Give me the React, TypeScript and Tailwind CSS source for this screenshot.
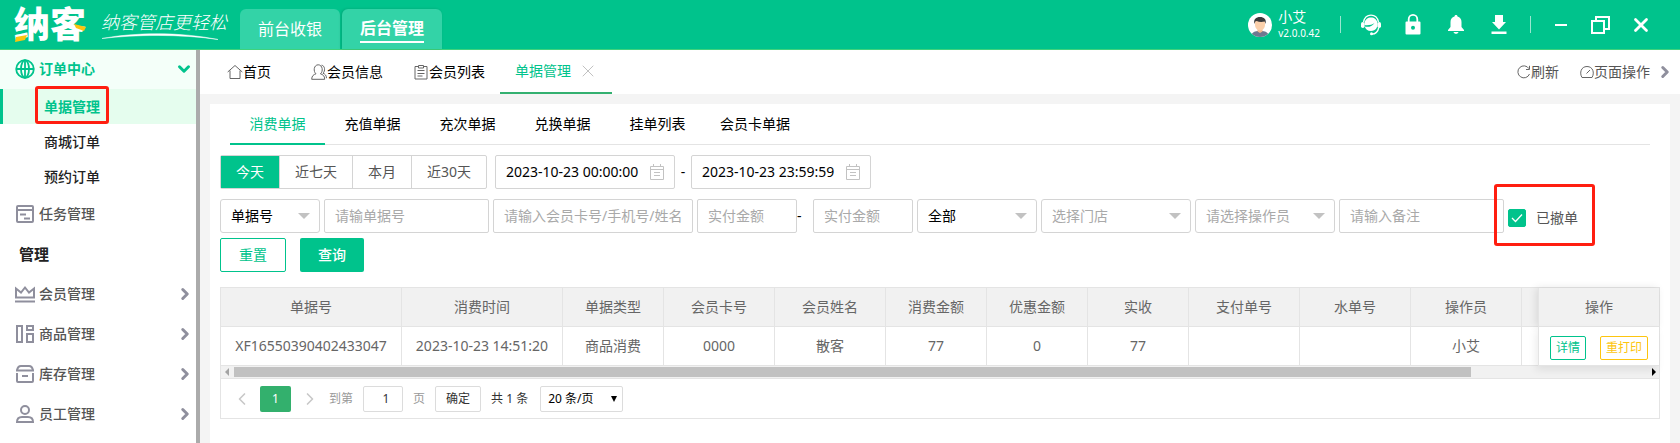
import React, { useState } from 'react';
import {
  ChevronDown,
  ChevronLeft,
  ChevronRight,
  X,
} from 'lucide-react';

interface Column {
  title: string;
  width: string;
  value: string;
}

const columns: Column[] = [
  { title: '单据号', width: 'w-[181px]', value: 'XF16550390402433047' },
  { title: '消费时间', width: 'w-[161px]', value: '2023-10-23 14:51:20' },
  { title: '单据类型', width: 'w-[101px]', value: '商品消费' },
  { title: '会员卡号', width: 'w-[111px]', value: '0000' },
  { title: '会员姓名', width: 'w-[111px]', value: '散客' },
  { title: '消费金额', width: 'w-[101px]', value: '77' },
  { title: '优惠金额', width: 'w-[101px]', value: '0' },
  { title: '实收', width: 'w-[101px]', value: '77' },
  { title: '支付单号', width: 'w-[111px]', value: '' },
  { title: '水单号', width: 'w-[111px]', value: '' },
  { title: '操作员', width: 'w-[111px]', value: '小艾' },
];

const billTabs = ['消费单据', '充值单据', '充次单据', '兑换单据', '挂单列表', '会员卡单据'];
const ranges = ['今天', '近七天', '本月', '近30天'];

function Logo() {
  return (
    <div className="relative ml-[14px] w-[74px] shrink-0">
      <span className="block text-[36px] leading-[50px] font-black text-white">纳客</span>
      <svg className="absolute top-[24px] left-0" width="74" height="18" viewBox="0 0 74 18">
        <path d="M2 13l11-2-2 5-10 2z" fill="#fdc50f" />
        <path d="M60 0l12 3-2 4-8-3z" fill="#fdc50f" />
      </svg>
    </div>
  );
}

function Slogan() {
  return (
    <div className="ml-[13px] w-[126px] shrink-0">
      <div className="text-[18px] leading-[20px] font-light italic whitespace-nowrap text-white">
        纳客管店更轻松
      </div>
      <svg width="118" height="8" viewBox="0 0 118 8">
        <path d="M1 6.500C35 0 80 0 117 7.500C80 2 35 2.500 1 6.500z" fill="#fff" stroke="#fff" strokeWidth=".5" />
      </svg>
    </div>
  );
}

function Avatar() {
  return (
    <svg width="24" height="24" viewBox="0 0 24 24">
      <clipPath id="face">
        <circle cx="12" cy="12" r="12" />
      </clipPath>
      <g clipPath="url(#face)">
        <rect width="24" height="24" fill="#fff" />
        <path d="M3 24c0-4 3-5.500 6.500-6h5c3.500.5 6.500 2 6.500 6z" fill="#6f7990" />
        <path d="M9.500 15h5v3.500L12 20l-2.500-1.500z" fill="#f0b890" />
        <path d="M7 8h10v4c0 3-2.500 5.500-5 5.500S7 15 7 12z" fill="#fbd0ab" />
        <path d="M6.300 11C5.500 6 8 4 12 4s6.500 2 5.700 7l-1-2.500c-3 .8-6 .5-8-.5l-1.400.6z" fill="#3a3a3c" />
      </g>
    </svg>
  );
}

function ServiceIcon() {
  return (
    <svg width="20" height="22" viewBox="0 0 20 22" fill="none">
      <path d="M2.500 8C3.500 3.500 6.500 1.200 10 1.200S16.500 3.500 17.500 8" stroke="#fff" strokeWidth="1.300" />
      <path d="M3.500 9C4 5.500 6.800 3.500 10 3.500s6 2 6.500 5.500c.4 4-1.500 8-6.500 8-3.500 0-5.500-2-6.300-4.500 3 .8 7.300.5 9.800-3.500-2.500 2-6.500 2.500-10 2z" fill="#fff" />
      <rect x="0" y="8" width="3.600" height="6" rx="1.800" fill="#fff" />
      <rect x="16.400" y="8" width="3.600" height="6" rx="1.800" fill="#fff" />
      <path d="M17.800 13.500c-.8 4-3.500 6.500-7 6.700" stroke="#fff" strokeWidth="1.300" />
      <circle cx="10.500" cy="19.800" r="1.500" fill="#fff" />
    </svg>
  );
}

function LockIcon() {
  return (
    <svg width="16" height="21" viewBox="0 0 16 21">
      <path d="M3.700 8V5.200a4.300 4.300 0 0 1 8.600 0V8" fill="none" stroke="#fff" strokeWidth="1.800" />
      <path fillRule="evenodd" d="M1.500 7.500h13a1 1 0 0 1 1 1v11a1 1 0 0 1-1 1h-13a1 1 0 0 1-1-1v-11a1 1 0 0 1 1-1zM8 11.800a2 2 0 1 0 0 4 2 2 0 0 0 0-4z" fill="#fff" />
    </svg>
  );
}

function BellIcon() {
  return (
    <svg width="16" height="19" viewBox="0 0 16 19" fill="#fff">
      <path d="M8 0c1 0 1.500.6 1.500 1.500 2.600.7 4 2.800 4 5.500v5l2.500 3v1H0v-1l2.500-3V7c0-2.700 1.400-4.800 4-5.500C6.500.6 7 0 8 0z" />
      <path d="M5.500 17h5c-.3 1.200-1.200 1.800-2.500 1.800S5.800 18.200 5.500 17z" />
    </svg>
  );
}

function DownloadIcon() {
  return (
    <svg width="16" height="19" viewBox="0 0 16 19" fill="#fff">
      <path d="M4 0h8v7h3l-7 7.500L1 7h3z" />
      <path d="M.5 16.500h15V19H.5z" />
    </svg>
  );
}

function RestoreIcon() {
  return (
    <svg width="19" height="18" viewBox="0 0 19 18" fill="none" stroke="#fff" strokeWidth="2">
      <path d="M1 5h12v12H1z" />
      <path d="M5 5V1h13v12h-5" />
    </svg>
  );
}

function GlobeIcon() {
  return (
    <svg width="20" height="20" viewBox="0 0 20 20" fill="none" stroke="#00c38c" strokeWidth="1.800">
      <circle cx="10" cy="10" r="8.800" />
      <ellipse cx="10" cy="10" rx="4" ry="8.800" />
      <path d="M1 10h18M10 1v18" />
    </svg>
  );
}

const menuIcon = 'shrink-0 fill-none stroke-[#8f8f9d] stroke-2';

function TaskIcon() {
  return (
    <svg className={menuIcon} width="20" height="20" viewBox="0 0 20 20">
      <rect x="2" y="2" width="16" height="16" rx="1" />
      <path d="M2 6h16M5 10.500h6M9 14.500h6" />
    </svg>
  );
}

function CrownIcon() {
  return (
    <svg className={menuIcon} width="20" height="20" viewBox="0 0 20 20">
      <path d="M1 13.500V4.500l5 4L10 3.500l4 5 5-4v9zM0 17.500h20" />
    </svg>
  );
}

function GoodsIcon() {
  return (
    <svg className={menuIcon} width="20" height="20" viewBox="0 0 20 20">
      <path d="M2 2h5v16H2zM12 2h6v4h-6zM12 10h6v8h-6z" />
    </svg>
  );
}

function StockIcon() {
  return (
    <svg className={menuIcon} width="20" height="20" viewBox="0 0 20 20">
      <path d="M2 9v8a1 1 0 0 0 1 1h14a1 1 0 0 0 1-1V9M1 6.500h18M2 6.500c.5-3 2-4.500 4-4.500h8c2 0 3.500 1.500 4 4.500M7 12h6" />
    </svg>
  );
}

function StaffIcon() {
  return (
    <svg className={menuIcon} width="20" height="20" viewBox="0 0 20 20">
      <circle cx="10" cy="6" r="4" />
      <path d="M2 18c0-3.500 2-5 5-5h6c3 0 5 1.500 5 5z" />
    </svg>
  );
}

const thinIcon = 'shrink-0 fill-none stroke-[#666]';

function HomeIcon() {
  return (
    <svg className={thinIcon} width="16" height="16" viewBox="0 0 16 16">
      <path d="M.7 8L8 1.500 15.300 8M3 6.500V14.500h10V6.500" />
    </svg>
  );
}

function MembersIcon() {
  return (
    <svg className={thinIcon} width="16" height="16" viewBox="0 0 16 16">
      <path d="M.7 15.300c0-3.500 2-4.800 4.300-5.500C2 7.500 2.800.8 7.200.8s5.300 6.700 2.200 9c2.400.7 4.300 2 4.300 5.500z" />
      <path d="M10.500 1.200c3.500.3 4 5.800 1.500 8 2 .8 3.500 2.300 3.500 5" />
    </svg>
  );
}

function ListIcon() {
  return (
    <svg className={thinIcon} width="14" height="16" viewBox="0 0 14 16">
      <path d="M4 2.500H1v12.500h12V2.500h-3M4.500 1.500h5v2.500h-5zM3.500 6.500h7M3.500 9.500h7M3.500 12h5" />
    </svg>
  );
}

function RefreshIcon() {
  return (
    <svg className={thinIcon} width="14" height="14" viewBox="0 0 14 14">
      <path d="M12.500 9A6 6 0 1 1 12 3.700M12.500.8v3.700H9" />
    </svg>
  );
}

function GaugeIcon() {
  return (
    <svg className={thinIcon} width="14" height="14" viewBox="0 0 14 14">
      <path d="M2 12.500C-.8 8 1 1.500 7 1.500s7.800 6.500 5 11zM6.500 8.500L10 5" />
    </svg>
  );
}

function CalendarIcon() {
  return (
    <svg className="shrink-0 fill-none stroke-[#c2c2c2]" width="14" height="16" viewBox="0 0 14 16">
      <path d="M.5 2.500h13v13H.5zM.5 5.500h13M3.500 0v3M10.500 0v3M4 8.500h6M4 11.500h6" />
    </svg>
  );
}

function Separator() {
  return <span className="h-[17px] w-px bg-white/60" />;
}

function Header() {
  return (
    <header className="flex h-[50px] items-stretch border-b border-[#3fd27c] bg-[#00c38c] text-white">
      <Logo />
      <div className="flex items-start pt-[12px]">
        <Slogan />
      </div>
      <nav className="ml-[13px] flex items-end gap-[2px]">
        <a href="#front" className="flex h-10 w-[100px] items-center justify-center rounded-t-md bg-[#33d3a7] text-base">
          前台收银
        </a>
        <a href="#back" className="flex h-10 w-[100px] items-center justify-center rounded-t-md bg-[#33d3a7] text-base font-bold shadow-[-1px_0_3px_rgba(0,0,0,0.15)]">
          <span className="border-b-2 border-white leading-[26px]">后台管理</span>
        </a>
      </nav>
      <div className="ml-auto flex items-center pr-7">
        <Avatar />
        <div className="ml-[6px]">
          <div className="text-sm leading-[18px]">小艾</div>
          <div className="text-[10px] leading-[15px]">v2.0.0.42</div>
        </div>
        <div className="ml-5 flex items-center gap-5">
          <Separator />
          <button aria-label="客服"><ServiceIcon /></button>
        </div>
        <div className="ml-6 flex items-center gap-[27px]">
          <button aria-label="锁屏"><LockIcon /></button>
          <button aria-label="通知"><BellIcon /></button>
          <button aria-label="下载"><DownloadIcon /></button>
        </div>
        <div className="ml-[23px] flex items-center gap-6">
          <Separator />
          <button aria-label="最小化" className="h-[2px] w-3 bg-white" />
          <button aria-label="还原"><RestoreIcon /></button>
        </div>
        <button aria-label="关闭" className="ml-5"><X className="h-[22px] w-[22px]" strokeWidth={3} /></button>
      </div>
    </header>
  );
}

interface MenuRowProps {
  icon: React.ReactNode;
  label: string;
  arrow?: boolean;
}

function MenuRow({ icon, label, arrow }: MenuRowProps) {
  return (
    <a href="#menu" className="flex h-10 items-center pr-[2px] pl-[15px] text-sm font-medium text-[#555]">
      {icon}
      <span className="ml-[4px]">{label}</span>
      {arrow && <ChevronRight className="ml-auto h-[18px] w-[18px] text-[#8f8f9d]" strokeWidth={4} />}
    </a>
  );
}

function Sidebar() {
  return (
    <aside className="w-[200px] shrink-0 border-r-4 border-[#ababab] bg-white">
      <a href="#orders" className="flex h-[39px] items-center bg-[#f4fff9] pr-[3px] pb-px pl-[15px] text-sm font-bold text-[#00c38c]">
        <GlobeIcon />
        <span className="ml-[4px]">订单中心</span>
        <ChevronDown className="ml-auto h-[18px] w-[18px]" strokeWidth={4} />
      </a>
      <a href="#bills" className="relative flex h-[35px] items-center border-l-[3px] border-[#00c38c] bg-[#e5fdee] pl-[41px] text-sm font-bold text-[#00c38c]">
        单据管理
        <span className="absolute -top-[3px] left-8 h-[38px] w-[74px] rounded-[3px] border-[3px] border-[#ff1e10]" />
      </a>
      <a href="#mall" className="flex h-[35px] items-center pl-11 text-sm font-medium text-[#222]">商城订单</a>
      <a href="#booking" className="flex h-[35px] items-center pl-11 text-sm font-medium text-[#222]">预约订单</a>
      <MenuRow icon={<TaskIcon />} label="任务管理" />
      <h2 className="flex h-10 items-center pl-[19px] text-[15px] font-bold text-[#222]">管理</h2>
      <MenuRow icon={<CrownIcon />} label="会员管理" arrow />
      <MenuRow icon={<GoodsIcon />} label="商品管理" arrow />
      <MenuRow icon={<StockIcon />} label="库存管理" arrow />
      <MenuRow icon={<StaffIcon />} label="员工管理" arrow />
    </aside>
  );
}

function PageTabs() {
  return (
    <div className="flex h-11 items-center bg-white pr-[6px] pl-[27px] text-sm text-black">
      <a href="#home" className="flex items-center"><HomeIcon />首页</a>
      <a href="#member" className="ml-10 flex items-center"><MembersIcon />会员信息</a>
      <a href="#members" className="ml-[31px] flex items-center"><ListIcon /><span className="ml-px">会员列表</span></a>
      <div className="ml-[15px] flex h-full w-28 items-center border-b-2 border-[#33b070] pl-[15px] text-[#00c38c]">
        单据管理
        <button aria-label="关闭标签" className="ml-[7px] text-[#b5b5b5]"><X className="h-5 w-5" strokeWidth={1} /></button>
      </div>
      <button className="ml-auto flex items-center text-[#555]"><RefreshIcon />刷新</button>
      <button className="ml-[21px] flex items-center text-[#555]"><GaugeIcon />页面操作</button>
      <ChevronRight className="ml-[6px] h-[18px] w-[18px] text-[#8f8f9d]" strokeWidth={4} />
    </div>
  );
}

function DateBox({ label, value }: { label: string; value: string }) {
  return (
    <div className="flex h-[34px] w-[180px] items-center rounded-[2px] border border-[#d4d4d4] px-[10px]">
      <input aria-label={label} defaultValue={value} className="w-full min-w-0 text-sm text-black outline-none" />
      <CalendarIcon />
    </div>
  );
}

interface SelectBoxProps {
  label: string;
  width: string;
  muted?: boolean;
}

function SelectBox({ label, width, muted }: SelectBoxProps) {
  return (
    <div className={`relative h-[34px] shrink-0 ${width}`}>
      <select
        aria-label={label}
        className={`h-full w-full appearance-none rounded-[3px] border border-[#d4d4d4] bg-white pl-[10px] text-sm outline-none ${
          muted ? 'text-[#a9a9a9]' : 'text-black'
        }`}
      >
        <option>{label}</option>
      </select>
      <span className="pointer-events-none absolute top-[14px] right-[10px] border-x-[6px] border-t-[6px] border-x-transparent border-t-[#c2c2c2]" />
    </div>
  );
}

function TextBox({ placeholder, width }: { placeholder: string; width: string }) {
  return (
    <input
      aria-label={placeholder}
      placeholder={placeholder}
      className={`h-[34px] shrink-0 rounded-[2px] border border-[#d4d4d4] px-[10px] pb-[2px] text-sm outline-none placeholder:text-[#a9a9a9] ${width}`}
    />
  );
}

function Filters() {
  const [range, setRange] = useState('今天');
  const [revoked, setRevoked] = useState(true);

  return (
    <>
      <div className="mt-[10px] flex items-center">
        <div className="flex h-[34px] rounded-[2px] border border-[#d4d4d4] text-sm">
          {ranges.map((item) => (
            <button
              key={item}
              onClick={() => setRange(item)}
              className={`border-r border-[#d4d4d4] px-[15px] last:border-r-0 ${
                range === item ? 'bg-[#00c38c] text-white' : 'text-[#555]'
              }`}
            >
              {item}
            </button>
          ))}
        </div>
        <div className="ml-2 flex items-center">
          <DateBox label="开始时间" value="2023-10-23 00:00:00" />
          <span className="w-4 text-center text-sm">-</span>
          <DateBox label="结束时间" value="2023-10-23 23:59:59" />
        </div>
      </div>

      <div className="mt-[10px] flex items-center gap-1">
        <SelectBox label="单据号" width="w-[100px]" />
        <TextBox placeholder="请输单据号" width="w-[165px]" />
        <TextBox placeholder="请输入会员卡号/手机号/姓名" width="w-[200px]" />
        <div className="flex items-center">
          <TextBox placeholder="实付金额" width="w-[100px]" />
          <span className="w-4 text-sm">-</span>
          <TextBox placeholder="实付金额" width="w-[100px]" />
        </div>
        <SelectBox label="全部" width="w-[120px]" />
        <SelectBox label="选择门店" width="w-[150px]" muted />
        <SelectBox label="请选择操作员" width="w-[140px]" muted />
        <TextBox placeholder="请输入备注" width="w-[165px]" />
        <label className="relative mt-1 flex items-center text-sm whitespace-nowrap text-[#555]">
          <input
            type="checkbox"
            checked={revoked}
            onChange={() => setRevoked(!revoked)}
            className="peer h-[18px] w-[18px] appearance-none rounded-[2px] border border-[#00c38c] checked:bg-[#00c38c]"
          />
          <svg className="pointer-events-none absolute left-[3px] hidden peer-checked:block" width="12" height="10" viewBox="0 0 12 10" fill="none" stroke="#fff" strokeWidth="1.300">
            <path d="M1 5l3.500 3.500L11 1.500" />
          </svg>
          <span className="ml-[10px]">已撤单</span>
          <span className="pointer-events-none absolute -top-6 -left-[14px] h-[62px] w-[101px] rounded-[3px] border-[3px] border-[#ff1e10]" />
        </label>
      </div>

      <div className="mt-[5px] flex gap-[14px]">
        <button className="h-[34px] w-[66px] rounded-[2px] border border-[#00c38c] text-sm text-[#00c38c]">重置</button>
        <button className="h-[34px] w-16 rounded-[2px] bg-[#00c38c] text-sm font-medium text-white">查询</button>
      </div>
    </>
  );
}

const headCell = 'h-[39px] border-r border-b border-[#e4e4e4] bg-[#f1f1f1] p-0 text-center font-normal';
const bodyCell = 'h-[39px] border-r border-b border-[#e4e4e4] bg-white p-0 text-center';

function BillTable() {
  return (
    <div className="mt-[15px] border border-[#e4e4e4]">
      <table className="w-full table-fixed border-separate border-spacing-0 text-sm text-[#666]">
        <thead>
          <tr>
            {columns.map((col) => (
              <th key={col.title} className={`${headCell} ${col.width}`}>{col.title}</th>
            ))}
            <th className="border-b border-[#e4e4e4] bg-[#f1f1f1] p-0" />
            <th className="relative w-[121px] border-b border-l border-[#e4e4e4] bg-[#f1f1f1] p-0 font-normal shadow-[-2px_0_8px_rgba(0,0,0,0.10)]">操作</th>
          </tr>
        </thead>
        <tbody>
          <tr>
            {columns.map((col) => (
              <td key={col.title} className={bodyCell}>{col.value}</td>
            ))}
            <td className="border-b border-[#e4e4e4] p-0" />
            <td className="relative border-b border-l border-[#e4e4e4] bg-white p-0 shadow-[-2px_4px_8px_rgba(0,0,0,0.08)]">
              <div className="flex items-center gap-[14px] pt-[3px] pl-[11px] text-xs">
                <button className="h-6 rounded-[2px] border border-[#00c38c] px-[5px] text-[#00c38c]">详情</button>
                <button className="h-6 rounded-[2px] border border-[#fdc50f] px-[5px] text-[#fdc50f]">重打印</button>
              </div>
            </td>
          </tr>
        </tbody>
      </table>

      <div className="flex h-[13px] items-center border-b border-[#e4e4e4] bg-[#f1f1f1]">
        <span className="mr-[5px] ml-1 border-y-4 border-r-4 border-y-transparent border-r-[#a3a3a3]" />
        <span className="h-[10px] w-[86%] bg-[#c1c1c1]" />
        <span className="mr-[3px] ml-auto border-y-4 border-l-4 border-y-transparent border-l-black" />
      </div>

      <div className="flex h-[39px] items-center pl-[11px] text-xs text-[#333]">
        <button aria-label="上一页" className="text-[#c8c8c8]"><ChevronLeft className="h-5 w-5" strokeWidth={2} /></button>
        <button className="ml-2 h-[26px] w-[31px] rounded-[2px] bg-[#33b06d] text-white">1</button>
        <button aria-label="下一页" className="ml-[9px] text-[#c8c8c8]"><ChevronRight className="h-5 w-5" strokeWidth={2} /></button>
        <label className="ml-[9px] flex items-center gap-[10px] text-[#999]">
          到第
          <input defaultValue="1" className="h-[26px] w-10 rounded-[2px] border border-[#dcdcdc] pl-[6px] text-center text-[#333] outline-none" />
          页
        </label>
        <button className="ml-[10px] h-[26px] w-[46px] rounded-[2px] border border-[#dcdcdc]">确定</button>
        <span className="ml-[10px]">共 1 条</span>
        <div className="relative ml-3 h-[26px] w-[83px]">
          <select aria-label="每页条数" className="h-full w-full appearance-none rounded-[2px] border border-[#dcdcdc] pl-[7px] text-black outline-none">
            <option>20 条/页</option>
          </select>
          <span className="pointer-events-none absolute top-[10px] right-[6px] border-x-[3px] border-t-[6px] border-x-transparent border-t-black" />
        </div>
      </div>
    </div>
  );
}

export default function App() {
  const [tab, setTab] = useState('消费单据');

  return (
    <div className="flex h-screen flex-col overflow-hidden bg-white font-['Noto_Sans','Noto_Sans_CJK_SC',sans-serif]">
      <Header />
      <div className="flex min-h-0 flex-1">
        <Sidebar />
        <main className="flex min-w-0 flex-1 flex-col bg-[#f4f4f4]">
          <PageTabs />
          <section className="mx-[10px] mt-[10px] flex-1 bg-white px-[10px]">
            <div className="mx-[10px] flex h-[41px] border-b border-[#e4e4e4] text-sm">
              {billTabs.map((item) => (
                <button
                  key={item}
                  onClick={() => setTab(item)}
                  className={`-mb-px min-w-[95px] border-b-2 px-[15px] ${
                    tab === item ? 'border-[#00c38c] text-[#00c38c]' : 'border-transparent text-black'
                  }`}
                >
                  {item}
                </button>
              ))}
            </div>
            <Filters />
            <BillTable />
          </section>
        </main>
      </div>
    </div>
  );
}
